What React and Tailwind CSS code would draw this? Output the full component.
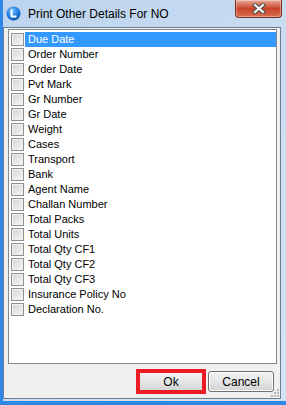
import React from "react";

const items = [
  "Due Date",
  "Order Number",
  "Order Date",
  "Pvt Mark",
  "Gr Number",
  "Gr Date",
  "Weight",
  "Cases",
  "Transport",
  "Bank",
  "Agent Name",
  "Challan Number",
  "Total Packs",
  "Total Units",
  "Total Qty CF1",
  "Total Qty CF2",
  "Total Qty CF3",
  "Insurance Policy No",
  "Declaration No.",
];

function AppIcon() {
  return (
    <svg width="15" height="15" viewBox="0 0 15 15">
      <defs>
        <radialGradient id="ic" cx="40%" cy="30%" r="70%">
          <stop offset="0%" stopColor="#7cc4ff" />
          <stop offset="60%" stopColor="#1f7fe0" />
          <stop offset="100%" stopColor="#0b55b3" />
        </radialGradient>
      </defs>
      <circle cx="7.5" cy="7.5" r="7" fill="url(#ic)" />
      <path d="M5.5 3.5 L5.5 10.5 L10.5 10.5" stroke="#fff" strokeWidth="2" fill="none" strokeLinejoin="round" />
    </svg>
  );
}

function CloseGlyph() {
  return (
    <svg width="14" height="11" viewBox="0 0 14 11">
      <path d="M3 2 L11 9 M11 2 L3 9" stroke="#4a4a4a" strokeWidth="4.2" strokeLinecap="square" />
      <path d="M3 2 L11 9 M11 2 L3 9" stroke="#ffffff" strokeWidth="2.2" strokeLinecap="square" />
    </svg>
  );
}

function Check() {
  return (
    <span className="block w-[13px] h-[13px] shrink-0 border border-[#8e8f8f] bg-linear-to-br from-[#d4d4d4] to-[#f6f6f6] shadow-[inset_0_0_0_1px_#f1f1f1]" />
  );
}

function WinButton({ children }) {
  return (
    <div className="w-[66px] h-[21px] rounded-[3px] border border-[#707070] bg-linear-to-b from-[#f2f2f2] via-[#e6e6e6] to-[#d2d2d2] shadow-[inset_0_0_0_1px_#fbfbfb] flex items-center justify-center text-[12px] text-black">
      {children}
    </div>
  );
}

export default function App() {
  return (
    <div className="w-[286px] h-[405px] flex flex-col bg-linear-to-br from-[#bcd4ee] to-[#d3e3f5] border-l-[3px] border-b-[4px] border-[#2f87e6] font-['Liberation_Sans',Arial,sans-serif] overflow-hidden">
      {/* title bar */}
      <div className="h-[27px] flex items-start shrink-0">
        <div className="ml-[3px] mt-[6px]">
          <AppIcon />
        </div>
        <div className="ml-[7px] mt-[7px] text-[12px] text-black leading-[14px]">Print Other Details For NO</div>
        <div className="ml-auto mr-[4px] w-[47px] h-[18px] rounded-b-[4px] border border-t-0 border-[#7d2b1d] bg-linear-to-b from-[#e9a898] via-[#c8432b] to-[#d8704f] shadow-[inset_0_0_0_1px_rgba(255,255,255,0.35)] flex items-center justify-center">
          <CloseGlyph />
        </div>
      </div>

      {/* client area */}
      <div className="flex-1 mr-[5px] mb-[2px] border border-[#6f7d8e] bg-[#f0f0f0] flex flex-col pl-[4px] pr-[3px] pt-[1px] pb-[6px] relative">
        <div className="flex-1 border border-[#828790] bg-white pt-[2px]">
          {items.map((it, i) => (
            <div key={it} className="h-[15px] flex items-center pl-[2px]">
              <Check />
              <div
                className={`ml-[1px] flex-1 h-[15px] flex items-center pl-[3px] text-[11px] leading-[15px] ${
                  i === 0 ? "bg-[#3399ff] text-white" : "text-black"
                }`}
              >
                {it}
              </div>
            </div>
          ))}
        </div>

        <div className="mt-[7px] flex justify-end gap-[4px] pr-[3px]">
          <div className="relative">
            <WinButton>Ok</WinButton>
            <span className="absolute -left-[2px] -top-[2px] w-[70px] h-[25px] border-[4px] border-[#ed1c24]" />
          </div>
          <WinButton>Cancel</WinButton>
        </div>

        <svg className="absolute right-[1px] bottom-[1px]" width="8" height="8" viewBox="0 0 8 8">
          {[
            [6, 0],
            [6, 3],
            [3, 3],
            [6, 6],
            [3, 6],
            [0, 6],
          ].map(([x, y]) => (
            <rect key={`${x}-${y}`} x={x} y={y} width="2" height="2" fill="#b8b8b8" />
          ))}
        </svg>
      </div>
    </div>
  );
}
